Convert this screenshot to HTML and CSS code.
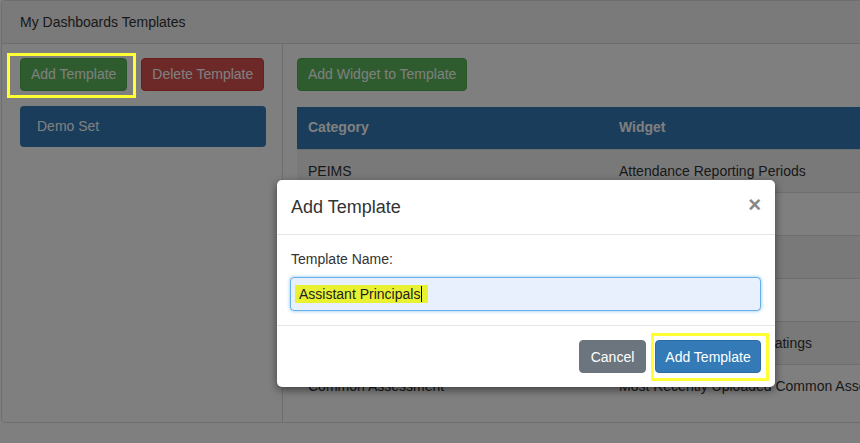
FILE: index.html
```html
<!DOCTYPE html>
<html>
<head>
<meta charset="utf-8">
<link rel="stylesheet" href="styles.css">
</head>
<body>
<div class="page">
  <div class="panel">
    <div class="panel-heading">My Dashboards Templates</div>
    <div class="panel-body">
      <div class="left">
        <div class="btn-row">
          <button class="btn btn-success">Add Template</button>
          <button class="btn btn-danger">Delete Template</button>
        </div>
        <div class="list-item">Demo Set</div>
      </div>
      <div class="right">
        <button class="btn btn-success">Add Widget to Template</button>
        <table class="grid">
          <thead>
            <tr><th class="c1">Category</th><th>Widget</th></tr>
          </thead>
          <tbody>
            <tr><td>PEIMS</td><td>Attendance Reporting Periods</td></tr>
            <tr><td>PEIMS</td><td>Enrollment</td></tr>
            <tr><td>STAAR</td><td>Performance</td></tr>
            <tr><td>STAAR</td><td>Growth</td></tr>
            <tr><td>Accountability</td><td>Campus Accountability Ratings</td></tr>
            <tr><td>Common Assessment</td><td>Most Recently Uploaded Common Assessment</td></tr>
          </tbody>
        </table>
      </div>
    </div>
  </div>
</div>

<div class="overlay"></div>

<div class="modal">
  <div class="modal-header">
    <span class="modal-title">Add Template</span>
    <span class="close">&times;</span>
  </div>
  <div class="modal-body">
    <label class="label">Template Name:</label>
    <div class="input"><span class="hl">Assistant Principals<span class="caret"></span></span></div>
  </div>
  <div class="modal-footer">
    <button class="btn btn-secondary">Cancel</button>
    <button class="btn btn-primary">Add Template</button>
  </div>
</div>

<div class="mark mark-left"></div>
<div class="mark mark-modal"></div>
</body>
</html>
```

FILE: styles.css
```css
* { box-sizing: border-box; }
html, body { margin: 0; padding: 0; }
body {
  width: 860px;
  height: 443px;
  overflow: hidden;
  background: #fff;
  font-family: "Liberation Sans", Arial, sans-serif;
  font-size: 14px;
  color: #333;
  position: relative;
}
.page { padding-left: 1px; width: 860px; overflow: hidden; }
.panel {
  width: 920px;
  height: 423px;
  border: 1px solid #ddd;
  border-radius: 4px;
  display: flex;
  flex-direction: column;
  overflow: hidden;
}
.panel-heading {
  height: 43px;
  flex: none;
  background: #f5f5f5;
  border-bottom: 1px solid #ddd;
  padding: 0 18px;
  display: flex;
  align-items: center;
  color: #333;
}
.panel-body { flex: 1; display: flex; }
.left {
  width: 281px;
  flex: none;
  border-right: 1px solid #ddd;
  padding: 14px 16px 0 18px;
}
.btn-row { display: flex; gap: 14px; }
.btn {
  font-family: "Liberation Sans", Arial, sans-serif;
  font-size: 14px;
  height: 33px;
  padding: 0 10px 1px;
  border: 1px solid transparent;
  border-radius: 4px;
  color: #fff;
  line-height: 1;
  white-space: nowrap;
  flex: none;
}
.btn-success { background: #5cb85c; border-color: #4cae4c; }
.btn-danger { background: #d9534f; border-color: #d43f3a; }
.btn-primary { background: #337ab7; border-color: #2e6da4; }
.btn-secondary { background: #6c757d; border-color: #6c757d; }
.list-item {
  margin-top: 15px;
  height: 41px;
  background: #337ab7;
  border-radius: 4px;
  color: #fff;
  padding: 0 17px 1px;
  display: flex;
  align-items: center;
}
.right { flex: 1; padding: 14px 0 0 14px; }
.grid {
  margin-top: 16px;
  width: 640px;
  border-collapse: collapse;
}
.grid th {
  background: #337ab7;
  color: #fff;
  text-align: left;
  font-weight: bold;
  height: 42px;
  padding: 0 11px 1px;
}
.grid th.c1, .grid td:first-child { width: 311px; }
.grid td {
  height: 43px;
  padding: 0 11px;
  border-top: 1px solid #ddd;
  white-space: nowrap;
}
.grid tbody tr:nth-child(odd) td { background: #f3f3f3; }
.overlay {
  position: absolute;
  inset: 0;
  background: rgba(0, 0, 0, 0.5);
}
.modal {
  position: absolute;
  left: 277px;
  top: 180px;
  width: 498px;
  background: #fff;
  border-radius: 5px;
  box-shadow: 0 3px 9px rgba(0, 0, 0, 0.5);
}
.modal-header {
  height: 55px;
  border-bottom: 1px solid #e5e5e5;
  padding: 0 14px;
  display: flex;
  align-items: center;
  justify-content: space-between;
}
.modal-title { font-size: 18px; color: #333; }
.close {
  font-size: 22px;
  font-weight: bold;
  color: #888;
  margin-right: 0;
  margin-top: -4px;
}
.modal-body { padding: 14px 14px 14px 13px; }
.label { display: block; color: #333; line-height: 20px; margin-bottom: 8px; padding-left: 1px; }
.input {
  height: 34px;
  background: #e8f0fe;
  border: 1px solid #66afe9;
  border-radius: 4px;
  box-shadow: 0 0 3px 1px rgba(102, 175, 233, 0.45);
  padding: 0 4px;
  display: flex;
  align-items: center;
}
.hl {
  background: #e9f231;
  color: #222;
  padding: 1px 6px 1px 4px;
  line-height: 16px;
  position: relative;
}
.caret {
  display: inline-block;
  width: 1px;
  height: 16px;
  background: #000;
  vertical-align: -3px;
  margin-left: 1px;
}
.modal-footer {
  border-top: 1px solid #e5e5e5;
  padding: 14px 14px 14px 0;
  display: flex;
  justify-content: flex-end;
  gap: 9px;
}
.modal-footer .btn-secondary { width: 67px; padding: 0; }
.modal-footer .btn-primary { width: 106px; padding: 0; }
.mark {
  position: absolute;
  border: 3px solid #ffff33;
}
.mark-left { left: 7px; top: 53px; width: 129px; height: 45px; }
.mark-modal { left: 651px; top: 333px; width: 118px; height: 48px; }
```
